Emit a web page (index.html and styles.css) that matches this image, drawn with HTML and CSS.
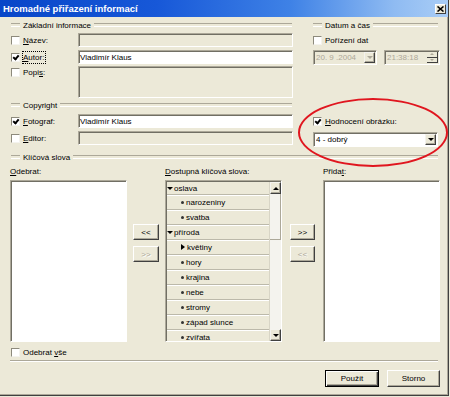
FILE: index.html
```html
<!DOCTYPE html>
<html lang="cs">
<head>
    <meta charset="UTF-8">
    <title>Hromadné přiřazení informací</title>
    <link rel="stylesheet" href="styles.css">
</head>
<body>
    <div class="window">
        <div class="titlebar">
            <span class="title">Hromadné přiřazení informací</span>
            <span class="close">
                <svg width="7" height="6" viewBox="0 0 7 6"><path d="M0.5 0.5 L6.5 5.5 M6.5 0.5 L0.5 5.5" stroke="#000" stroke-width="1.6"/></svg>
            </span>
        </div>

        <div class="content">
            <div class="top">
                <div class="group-head head-left">Základní informace</div>
                <div class="group-head head-right">Datum a čas</div>

                <!-- row: Název -->
                <label class="check c-check r2"><span class="box"></span><span><u>N</u>ázev:</span></label>
                <div class="field off c-field r2"></div>
                <label class="check c-right r2"><span class="box"></span><span>Pořízení dat</span></label>

                <!-- row: Autor -->
                <label class="check c-check r3"><span class="box on"></span><span class="focus"><u>A</u>utor:</span></label>
                <div class="field c-field r3">Vladimír Klaus</div>
                <div class="datetime c-right r3">
                    <div class="combo off date"><span class="val">20. 9 .2004</span><span class="drop"><i class="tri-down grey"></i></span></div>
                    <div class="combo off time"><span class="val">21:38:18</span><span class="spin"><span><i class="tri-up grey"></i></span><span><i class="tri-down grey"></i></span></span></div>
                </div>

                <!-- row: Popis -->
                <label class="check c-check r4 top-align"><span class="box"></span><span>Popi<u>s</u>:</span></label>
                <div class="field off memo c-field r4"></div>

                <div class="group-head head-left r5">Copyright</div>

                <!-- row: Fotograf -->
                <label class="check c-check r6"><span class="box on"></span><span><u>F</u>otograf:</span></label>
                <div class="field c-field r6">Vladimír Klaus</div>
                <label class="check c-right r6"><span class="box on"></span><span><u>H</u>odnocení obrázku:</span></label>

                <!-- row: Editor -->
                <label class="check c-check r7"><span class="box"></span><span><u>E</u>ditor:</span></label>
                <div class="field off c-field r7"></div>
                <div class="combo rating c-right r7"><span class="val">4 - dobrý</span><span class="drop"><i class="tri-down"></i></span></div>
            </div>

            <div class="group-head head-wide">Klíčová slova</div>

            <div class="lists">
                <div class="pane">
                    <div class="pane-label"><u>O</u>debrat:</div>
                    <div class="listbox"></div>
                </div>
                <div class="movers movers-left">
                    <button class="btn">&lt;&lt;</button>
                    <button class="btn disabled">&gt;&gt;</button>
                </div>
                <div class="pane">
                    <div class="pane-label"><u>D</u>ostupná klíčová slova:</div>
                    <div class="tree">
                        <div class="nodes">
                            <div class="node"><i class="tri-down"></i>oslava</div>
                            <div class="node child"><i class="dot"></i>narozeniny</div>
                            <div class="node child"><i class="dot"></i>svatba</div>
                            <div class="node"><i class="tri-down"></i>příroda</div>
                            <div class="node child"><i class="tri-right"></i>květiny</div>
                            <div class="node child"><i class="dot"></i>hory</div>
                            <div class="node child"><i class="dot"></i>krajina</div>
                            <div class="node child"><i class="dot"></i>nebe</div>
                            <div class="node child"><i class="dot"></i>stromy</div>
                            <div class="node child"><i class="dot"></i>západ slunce</div>
                            <div class="node child"><i class="dot"></i>zvířata</div>
                        </div>
                        <div class="vscroll">
                            <span class="sbtn"><i class="tri-up"></i></span>
                            <span class="thumb"></span>
                            <span class="track"></span>
                            <span class="sbtn"><i class="tri-down"></i></span>
                        </div>
                    </div>
                </div>
                <div class="movers movers-right">
                    <button class="btn">&gt;&gt;</button>
                    <button class="btn disabled">&lt;&lt;</button>
                </div>
                <div class="pane">
                    <div class="pane-label">Přida<u>t</u>:</div>
                    <div class="listbox"></div>
                </div>
            </div>

            <label class="check remove-all"><span class="box"></span><span>Odebrat <u>v</u>še</span></label>

            <div class="separator"></div>

            <div class="footer">
                <button class="btn default">Použít</button>
                <button class="btn">Storno</button>
            </div>
        </div>

        <div class="callout"></div>
    </div>
</body>
</html>
```

FILE: styles.css
```css
* {
    box-sizing: border-box;
}

body {
    margin: 0;
    background: #ece9d8;
    font-family: "Liberation Sans", Arial, sans-serif;
    font-size: 8px;
    color: #000;
}

u {
    text-decoration-thickness: 1px;
}

.window {
    position: relative;
    width: 449px;
    height: 396px;
    background: #ece9d8;
    border-right: 1px solid #404040;
    border-bottom: 1px solid #404040;
    box-shadow: inset -1px -1px 0 #aca899;
}

.titlebar {
    height: 17px;
    display: flex;
    align-items: center;
    justify-content: space-between;
    padding: 0 2px 0 3px;
    background: linear-gradient(90deg, #0846c8 0%, #1758d8 35%, #3f82e6 65%, #8fbbf2 88%, #a9cdf6 100%);
}

.title {
    color: #fff;
    font-weight: bold;
    font-size: 9.5px;
}

.close {
    width: 11px;
    height: 10px;
    display: flex;
    align-items: center;
    justify-content: center;
    background: #ece9d8;
    border: 1px solid;
    border-color: #fff #404040 #404040 #fff;
}

.content {
    padding: 2px 8px 0 10px;
}

/* top form grid */
.top {
    display: grid;
    grid-template-columns: 68px 215px 20px 127px;
    grid-template-rows: 14px 17px 16px 33px 15px 17px 17px;
    align-items: start;
}

.c-check { grid-column: 1; }
.c-field { grid-column: 2; }
.c-right { grid-column: 4; }
.r2 { grid-row: 2; }
.r3 { grid-row: 3; }
.r4 { grid-row: 4; }
.r5 { grid-row: 5; }
.r6 { grid-row: 6; }
.r7 { grid-row: 7; }

.group-head {
    display: flex;
    align-items: center;
    gap: 3px;
    height: 12px;
    white-space: nowrap;
}

.group-head::before,
.group-head::after {
    content: "";
    height: 2px;
    border-top: 1px solid #aca899;
    border-bottom: 1px solid #fff;
}

.group-head::before {
    width: 9px;
    flex: none;
}

.group-head::after {
    flex: 1;
}

.head-left {
    grid-column: 1 / 3;
    margin: 0 1px 0 1px;
}

.head-right {
    grid-column: 4;
    grid-row: 1;
    margin-right: 2px;
}

.head-wide {
    margin: 3px 2px 0 1px;
}

.check {
    display: flex;
    align-items: center;
    gap: 3px;
    height: 14px;
    padding-left: 1px;
    white-space: nowrap;
}

.c-right.check {
    padding-left: 0;
}

.check.top-align {
    align-items: flex-start;
    padding-top: 2px;
}

.box {
    position: relative;
    width: 9px;
    height: 9px;
    flex: none;
    background: #fff;
    border: 1px solid;
    border-color: #8d8a7c #f4f3ee #f4f3ee #8d8a7c;
}

.box.on::after {
    content: "";
    position: absolute;
    left: 1px;
    top: 0;
    width: 2px;
    height: 4px;
    border: solid #000;
    border-width: 0 2px 2px 0;
    transform: translate(1px, 0) rotate(40deg);
}

.focus {
    outline: 1px dotted #000;
    padding: 1px 1px 1px 0;
}

.field {
    height: 14px;
    display: flex;
    align-items: center;
    padding-left: 1px;
    white-space: nowrap;
    overflow: hidden;
    background: #fff;
    border: 1px solid;
    border-color: #aca899 #fff #fff #aca899;
    box-shadow: inset 1px 1px 0 #716f64;
}

.field.off {
    background: #ece9d8;
}

.field.memo {
    height: 32px;
}

/* combo boxes */
.datetime {
    display: flex;
    justify-content: space-between;
}

.combo {
    height: 15px;
    display: flex;
    align-items: center;
    padding: 1px 1px 1px 2px;
    background: #fff;
    border: 1px solid;
    border-color: #aca899 #fff #fff #aca899;
    box-shadow: inset 1px 1px 0 #716f64;
    white-space: nowrap;
}

.combo.off {
    background: #ece9d8;
    color: #aca899;
}

.combo.date {
    width: 64px;
}

.combo.time {
    width: 56px;
}

.combo.rating {
    margin-top: 1px;
    margin-right: 2px;
}

.val {
    flex: 1;
    overflow: hidden;
}

.drop,
.sbtn,
.spin > span {
    display: flex;
    align-items: center;
    justify-content: center;
    background: #ece9d8;
    border: 1px solid;
    border-color: #f4f3ee #404040 #404040 #f4f3ee;
    box-shadow: inset -1px -1px 0 #aca899;
}

.drop {
    width: 11px;
    height: 11px;
}

.spin {
    display: flex;
    flex-direction: column;
    width: 11px;
    height: 11px;
}

.spin > span {
    flex: 1;
    border-width: 0 1px 1px 0;
    box-shadow: none;
}

.tri-down,
.tri-up,
.tri-right {
    display: block;
    width: 0;
    height: 0;
    flex: none;
}

.tri-down {
    border-left: 3px solid transparent;
    border-right: 3px solid transparent;
    border-top: 3px solid #000;
}

.tri-up {
    border-left: 3px solid transparent;
    border-right: 3px solid transparent;
    border-bottom: 3px solid #000;
}

.tri-down.grey {
    border-top-color: #aca899;
}

.tri-up.grey {
    border-bottom-color: #aca899;
    border-left-width: 2px;
    border-right-width: 2px;
    border-bottom-width: 2px;
}

.spin .tri-down.grey {
    border-left-width: 2px;
    border-right-width: 2px;
    border-top-width: 2px;
}

.tri-right {
    border-top: 3px solid transparent;
    border-bottom: 3px solid transparent;
    border-left: 4px solid #000;
}

/* keyword lists */
.lists {
    display: flex;
    margin-top: 3px;
}

.pane {
    width: 117px;
    flex: none;
}

.pane-label {
    height: 12px;
    line-height: 12px;
    margin-bottom: 2px;
    white-space: nowrap;
}

.listbox,
.tree {
    height: 162px;
    background: #fff;
    border: 1px solid;
    border-color: #aca899 #fff #fff #aca899;
    box-shadow: inset 1px 1px 0 #716f64;
}

.movers {
    display: flex;
    flex-direction: column;
    gap: 6px;
    padding-top: 58px;
}

.movers-left {
    width: 26px;
    margin: 0 6px;
}

.movers-right {
    width: 25px;
    margin: 0 8px;
}

.btn {
    height: 16px;
    padding: 0;
    font: inherit;
    color: #000;
    background: #ece9d8;
    border: 1px solid;
    border-color: #fff #404040 #404040 #fff;
    box-shadow: inset -1px -1px 0 #aca899;
}

.btn.disabled {
    color: #aca899;
    text-shadow: 1px 1px 0 #fff;
}

.tree {
    display: flex;
    padding: 1px 0 0 1px;
    background: #ece9d8;
    overflow: hidden;
}

.nodes {
    flex: 1;
    overflow: hidden;
}

.node {
    height: 15px;
    display: flex;
    align-items: center;
    gap: 1px;
    white-space: nowrap;
    border-bottom: 1px solid #bcb9aa;
    box-shadow: inset 0 1px 0 #fff;
}

.node:first-child {
    height: 13px;
    box-shadow: none;
}

.node.child {
    padding-left: 14px;
    gap: 2px;
}

.node.child .tri-right {
    margin-right: 0;
}

.dot {
    display: block;
    width: 3px;
    height: 3px;
    border-radius: 50%;
    background: #333;
    flex: none;
}

.vscroll {
    width: 12px;
    display: flex;
    flex-direction: column;
    background: #f4f3ee;
    border-left: 1px solid #d8d5c6;
}

.sbtn {
    height: 12px;
    flex: none;
}

.thumb {
    height: 46px;
    flex: none;
    border-right: 1px solid #aca899;
    border-bottom: 1px solid #aca899;
}

.track {
    flex: 1;
}

.remove-all {
    margin-top: 4px;
    height: 12px;
}

.separator {
    height: 2px;
    margin: 2px 2px 0 0;
    border-top: 1px solid #aca899;
    border-bottom: 1px solid #fff;
}

.footer {
    display: flex;
    justify-content: flex-end;
    gap: 8px;
    margin-top: 8px;
}

.footer .btn {
    width: 53px;
    height: 17px;
}

.footer .btn.default {
    width: 54px;
    border-color: #000;
    box-shadow: inset 1px 1px 0 #fff, inset -1px -1px 0 #404040, inset -2px -2px 0 #aca899;
}

/* red hand-drawn highlight over the rating box */
.callout {
    position: absolute;
    left: 298px;
    top: 98px;
    width: 150px;
    height: 69px;
    border: 2px solid #e0161f;
    border-radius: 50%;
}
```
